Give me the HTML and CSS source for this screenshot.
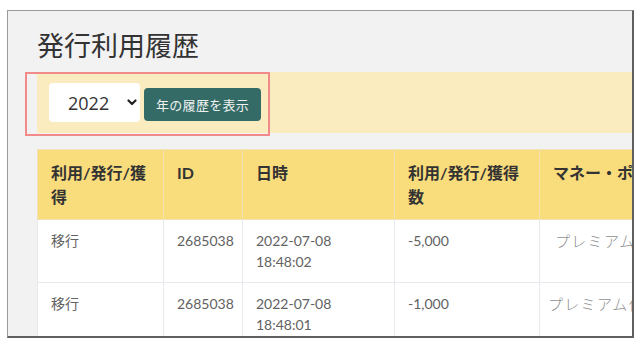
FILE: index.html
```html
<!DOCTYPE html>
<html lang="ja">
<head>
    <meta charset="UTF-8">
    <meta name="viewport" content="width=device-width, initial-scale=1.0">
    <title>発行利用履歴</title>
    <link rel="stylesheet" href="styles.css">
</head>
<body>
    <div class="frame">
        <h1 class="page-title">発行利用履歴</h1>

        <form class="year-bar">
            <div class="year-select">
                <select id="year">
                    <option>2022</option>
                    <option>2021</option>
                </select>
                <svg class="chevron" width="10" height="7" viewBox="0 0 10 7">
                    <path d="M1.5 1.5 L5 5 L8.5 1.5" fill="none" stroke="#222" stroke-width="2.2" stroke-linecap="round" stroke-linejoin="round"/>
                </svg>
            </div>
            <button type="button" class="show-button">年の履歴を表示</button>
        </form>

        <table class="history">
            <colgroup>
                <col class="c-type">
                <col class="c-id">
                <col class="c-date">
                <col class="c-amount">
                <col class="c-kind">
            </colgroup>
            <thead>
                <tr>
                    <th>利用/発行/獲得</th>
                    <th>ID</th>
                    <th>日時</th>
                    <th>利用/発行/獲得数</th>
                    <th>マネー・ポイント種別</th>
                </tr>
            </thead>
            <tbody>
                <tr>
                    <td>移行</td>
                    <td>2685038</td>
                    <td>2022-07-08<br>18:48:02</td>
                    <td>-5,000</td>
                    <td class="kind kind-indent">プレミアム付与分</td>
                </tr>
                <tr>
                    <td>移行</td>
                    <td>2685038</td>
                    <td>2022-07-08<br>18:48:01</td>
                    <td>-1,000</td>
                    <td class="kind">プレミアム付与分</td>
                </tr>
            </tbody>
        </table>

        <div class="highlight"></div>
    </div>
</body>
</html>
```

FILE: styles.css
```css
body {
    margin: 0;
    padding: 10px 7px 0 7px;
    background-color: white;
    font-family: Lato, "Noto Sans CJK JP", sans-serif;
}
.frame {
    position: relative;
    height: 325px;
    padding-left: 29px;
    background-color: #f2f2f2;
    border-top: 1px solid #9a9a9a;
    border-left: 1px solid #9a9a9a;
    border-right: 2px solid #606060;
    border-bottom: 2px solid #606060;
    overflow: hidden;
}
.page-title {
    margin: 18px 0 11px 0;
    font-family: "Noto Sans CJK JP", sans-serif;
    font-size: 27px;
    font-weight: normal;
    line-height: 32px;
    color: #333;
}
.year-bar {
    display: flex;
    align-items: center;
    height: 39px;
    padding: 11px 12px;
    margin: 0;
    background-color: #fbecbf;
}
.year-select {
    position: relative;
}
.year-select select {
    appearance: none;
    -webkit-appearance: none;
    width: 91px;
    height: 39px;
    padding: 0 0 0 19px;
    border: none;
    border-radius: 4px;
    background-color: white;
    font-family: "Open Sans", sans-serif;
    font-size: 18px;
    color: #333;
}
.year-select .chevron {
    position: absolute;
    left: 78px;
    top: 16px;
}
.show-button {
    height: 33px;
    margin: 4px 0 0 4px;
    padding: 0 12px;
    border: none;
    border-radius: 4px;
    background-color: #356b67;
    color: #eef2f1;
    font-family: "Noto Sans CJK JP", sans-serif;
    font-size: 13px;
    letter-spacing: 0.3px;
    cursor: pointer;
}
.history {
    width: 720px;
    margin-top: 16px;
    border-collapse: collapse;
    table-layout: fixed;
}
.history .c-type { width: 126px; }
.history .c-id { width: 79px; }
.history .c-date { width: 152px; }
.history .c-amount { width: 145px; }
.history .c-kind { width: 218px; }
.history th, .history td {
    border: 1px solid #e6e9ed;
    text-align: left;
    vertical-align: top;
}
.history th {
    padding: 11px 13px 10px 13px;
    background-color: #f9dc7c;
    border-color: #efe2b4;
    font-size: 16px;
    font-weight: bold;
    line-height: 24px;
    color: #333;
}
.history td {
    height: 42px;
    padding: 10px 13px 10px 13px;
    background-color: white;
    font-size: 14px;
    line-height: 21px;
    color: #626262;
}
.history td.kind {
    padding-left: 8px;
    font-family: "Noto Sans CJK JP", sans-serif;
    font-size: 15px;
    font-weight: 300;
    color: #8f8f8f;
    letter-spacing: 1.3px;
    white-space: nowrap;
}
.history td.kind-indent {
    padding-left: 15px;
}
.highlight {
    position: absolute;
    left: 17px;
    top: 61px;
    width: 241px;
    height: 60px;
    border: 2px solid #f38a8a;
}
```
